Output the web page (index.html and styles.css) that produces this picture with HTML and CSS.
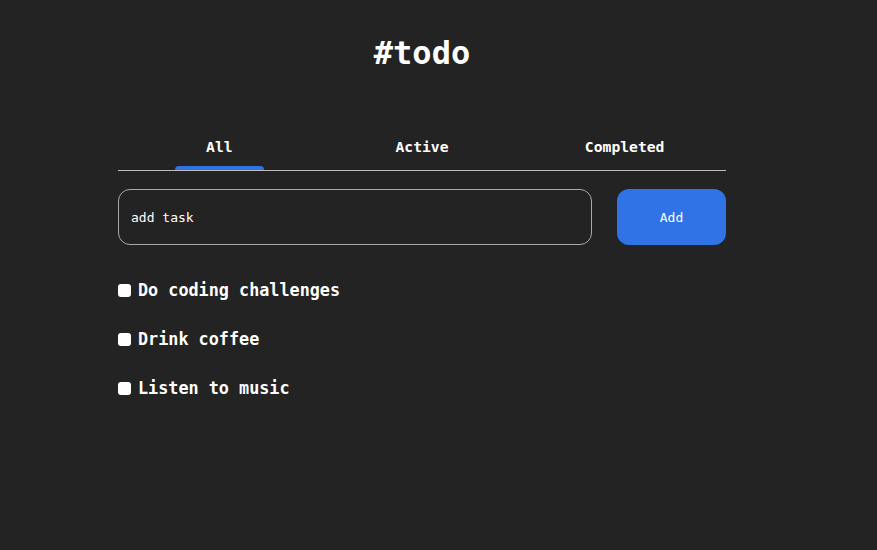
FILE: index.html
```html
<!DOCTYPE html>
<html lang="en">
<head>
<meta charset="utf-8">
<title>#todo</title>
<link rel="stylesheet" href="styles.css">
</head>
<body>
<div class="page">
  <main class="app">
    <h1 class="title">#todo</h1>
    <nav class="tabs">
      <div class="tab active">All<span class="indicator"></span></div>
      <div class="tab">Active</div>
      <div class="tab">Completed</div>
    </nav>
    <form class="add-form">
      <input class="task-input" type="text" placeholder="add task">
      <button class="add-btn" type="button">Add</button>
    </form>
    <ul class="list">
      <li class="item"><input class="check" type="checkbox"><span>Do coding challenges</span></li>
      <li class="item"><input class="check" type="checkbox"><span>Drink coffee</span></li>
      <li class="item"><input class="check" type="checkbox"><span>Listen to music</span></li>
    </ul>
  </main>
</div>
</body>
</html>
```
FILE: styles.css
```css
html, body {
  margin: 0;
  padding: 0;
  background: #232323;
  color: #ffffff;
  font-family: "DejaVu Sans Mono", "Liberation Mono", monospace;
}
.page {
  width: 844px;
  display: flex;
  justify-content: center;
}
.app {
  width: 608px;
}
.title {
  margin: 0;
  padding-top: 33px;
  font-size: 32px;
  line-height: 40px;
  font-weight: bold;
  text-align: center;
}
.tabs {
  margin-top: 47px;
  display: grid;
  grid-template-columns: repeat(3, 1fr);
  border-bottom: 1px solid #bdbdbd;
}
.tab {
  position: relative;
  text-align: center;
  font-size: 14.7px;
  line-height: 20px;
  padding: 17px 0 13px;
  font-weight: bold;
}
.indicator {
  position: absolute;
  left: 50%;
  bottom: 0;
  width: 89px;
  height: 4px;
  margin-left: -44px;
  background: #2f73e6;
  border-radius: 4px 4px 0 0;
}
.add-form {
  margin: 18px 0 0;
  display: flex;
  gap: 25px;
}
.task-input {
  flex: 1;
  height: 56px;
  box-sizing: border-box;
  background: transparent;
  border: 1px solid #aaaaaa;
  border-radius: 12px;
  padding: 0 12px;
  font-family: inherit;
  font-size: 13px;
  color: #fff;
  outline: none;
}
.task-input::placeholder {
  color: #ffffff;
  opacity: 1;
}
.add-btn {
  width: 109px;
  height: 56px;
  border: none;
  border-radius: 12px;
  background: #2f73e6;
  color: #fff;
  font-family: inherit;
  font-size: 13px;
}
.list {
  list-style: none;
  margin: 33px 0 0;
  padding: 0;
  display: flex;
  flex-direction: column;
  gap: 25px;
}
.item {
  display: flex;
  align-items: center;
  gap: 7px;
  font-size: 16.8px;
  line-height: 24px;
  font-weight: bold;
}
.check {
  appearance: none;
  -webkit-appearance: none;
  margin: 1px 0 0;
  width: 13px;
  height: 13px;
  background: #ffffff;
  border-radius: 3px;
}
```
